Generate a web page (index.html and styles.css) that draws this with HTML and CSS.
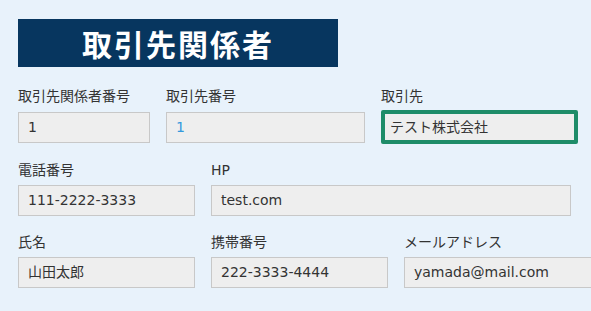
FILE: index.html
```html
<!DOCTYPE html>
<html lang="ja">
<head>
<meta charset="utf-8">
<link rel="stylesheet" href="styles.css">
</head>
<body>
<div class="page">
  <h1 class="title">取引先関係者</h1>
  <div class="row row-1">
    <div class="field w-132">
      <div class="label">取引先関係者番号</div>
      <div class="box">1</div>
    </div>
    <div class="field w-199">
      <div class="label">取引先番号</div>
      <div class="box link">1</div>
    </div>
    <div class="field w-197">
      <div class="label">取引先</div>
      <div class="box focus">テスト株式会社</div>
    </div>
  </div>
  <div class="row">
    <div class="field w-177">
      <div class="label">電話番号</div>
      <div class="box">111-2222-3333</div>
    </div>
    <div class="field w-360">
      <div class="label">HP</div>
      <div class="box">test.com</div>
    </div>
  </div>
  <div class="row">
    <div class="field w-177">
      <div class="label">氏名</div>
      <div class="box">山田太郎</div>
    </div>
    <div class="field w-177">
      <div class="label">携帯番号</div>
      <div class="box">222-3333-4444</div>
    </div>
    <div class="field w-200">
      <div class="label">メールアドレス</div>
      <div class="box">yamada@mail.com</div>
    </div>
  </div>
</div>
</body>
</html>
```
FILE: styles.css
```css
html, body {
  margin: 0;
  padding: 0;
  background: #e8f2fb;
  overflow: hidden;
}
body {
  width: 591px;
  height: 311px;
  font-family: "DejaVu Sans", "Noto Sans CJK JP", sans-serif;
  color: #333333;
}
.page {
  padding: 19px 0 0 18px;
}
.title {
  margin: 0;
  width: 320px;
  height: 48px;
  background: #07365f;
  color: #ffffff;
  font-family: "Noto Sans CJK JP", sans-serif;
  font-size: 30px;
  font-weight: 700;
  line-height: 48px;
  letter-spacing: 2px;
  text-align: center;
}
.row {
  display: flex;
  gap: 16px;
  margin-top: 16px;
  white-space: nowrap;
}
.row-1 {
  margin-top: 19px;
}
.field {
  display: flex;
  flex-direction: column;
  flex: none;
}
.w-132 { width: 132px; }
.w-177 { width: 177px; }
.w-197 { width: 197px; }
.w-199 { width: 199px; }
.w-200 { width: 200px; }
.w-360 { width: 360px; }
.label {
  font-size: 14px;
  line-height: 20px;
  height: 20px;
  margin-bottom: 5px;
  color: #333333;
}
.row-1 .label {
  margin-bottom: 6px;
}
.box {
  box-sizing: border-box;
  height: 31px;
  border: 1px solid #c8c8c8;
  background: #eeeeee;
  padding: 0 9px;
  font-size: 14px;
  line-height: 29px;
  color: #333333;
}
.link {
  color: #3399dd;
}
.focus {
  height: 34px;
  margin-top: -2px;
  border: 4px solid #1e8c68;
  border-radius: 2px;
  padding: 0 5px;
  line-height: 26px;
}
```
